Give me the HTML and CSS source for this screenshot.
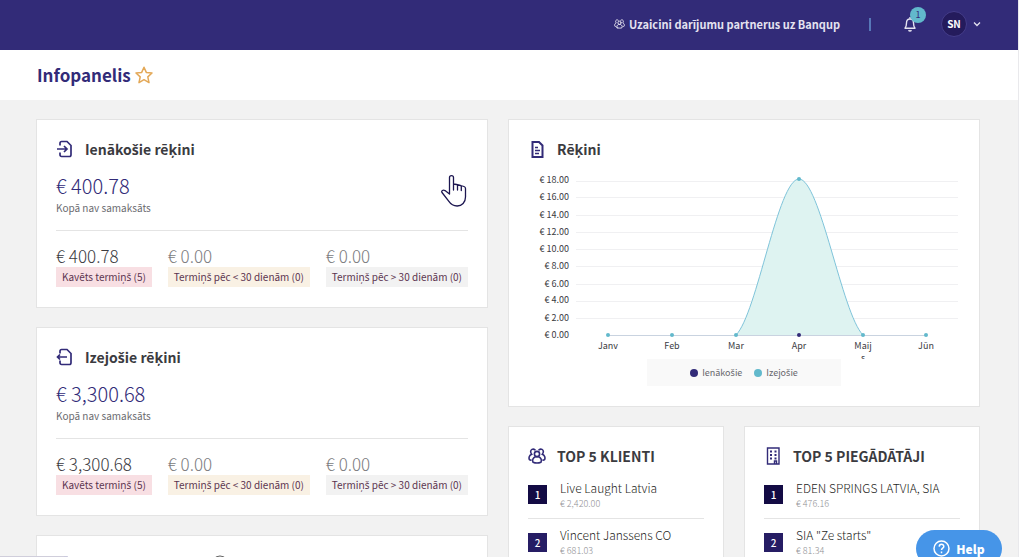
FILE: index.html
```html
<!DOCTYPE html>
<html lang="lv">
<head>
  <meta charset="UTF-8" />
  <meta name="viewport" content="width=device-width, initial-scale=1.0" />
  <title>Infopanelis</title>
  <link rel="stylesheet" href="styles.css">
</head>
<body>
  <svg class="symbols" aria-hidden="true">
    <symbol id="people" viewBox="0 0 18 16">
      <g fill="none" stroke="currentColor" stroke-width="1.6" stroke-linecap="round">
        <circle cx="9" cy="6" r="2.6" />
        <path d="M5 14.2c-1.2-2.600.4-4.600 2.400-5.400h3.200c2 .8 3.600 2.800 2.400 5.400-2 .8-6 .8-8 0z" />
        <path d="M7 1.800C5 .2 2.400 1.600 2.700 4c.1 1 .5 1.600 1 2.200C1.400 7.200.5 9.600 1.400 11.600c.5.4 1 .5 1.600.5" />
        <path d="M11 1.800c2-1.600 4.600-.2 4.300 2.200-.1 1-.5 1.600-1 2.200 2.300 1 3.200 3.400 2.300 5.400-.5.4-1 .5-1.600.5" />
      </g>
    </symbol>
  </svg>

  <header class="topbar">
    <a class="invite" href="#">
      <svg class="invite-icon"><use href="#people" /></svg>
      Uzaicini darījumu partnerus uz Banqup
    </a>
    <span class="separator"></span>
    <button class="bell" aria-label="1">
      <svg width="12" height="16" viewBox="0 0 12 16" fill="none" stroke="currentColor" stroke-width="1.4">
        <path d="M6 1v1.500M1 12.300h10c-1-1.300-1.500-2-1.500-5.300C9.500 4.500 8 3 6 3S2.500 4.500 2.500 7c0 3.300-.5 4-1.500 5.300z" stroke-linejoin="round" />
        <path d="M4.500 14.300c.8 1 2.200 1 3 0" />
      </svg>
      <span class="bell-count">1</span>
    </button>
    <button class="user">
      <span class="avatar">SN</span>
      <svg width="8" height="6" viewBox="0 0 8 6" fill="none" stroke="currentColor" stroke-width="1.3"><path d="M1 1.500l3 3 3-3" /></svg>
    </button>
  </header>

  <div class="page-title">
    <h1>Infopanelis</h1>
    <svg width="18" height="18" viewBox="0 0 18 18" fill="none" stroke="#e3a857" stroke-width="1.5" stroke-linejoin="round">
      <path d="M9 1.200l2.300 5.200 5.700.6-4.200 3.900 1.200 5.700L9 13.700l-5 2.900 1.200-5.700L1 7l5.700-.6z" />
    </svg>
  </div>

  <main class="dashboard">
    <div class="column">
      <section class="card">
        <h2 class="card-title">
          <svg class="card-icon" viewBox="0 0 18 18" fill="none" stroke="currentColor" stroke-width="1.7">
            <path d="M4 5.500V3.200C4 2.200 4.600 1.500 5.600 1.500H11l4 4v9.300c0 1-.6 1.700-1.600 1.700H5.600c-1 0-1.600-.7-1.600-1.700v-2.300M1 9h9.500M8 6l3 3-3 3" />
          </svg>
          <span>Ienāko<span class="caron">š</span>ie rēķini</span>
        </h2>
        <div class="total">€ 400.78</div>
        <div class="total-label">Kopā nav samaksāts</div>
        <div class="terms">
          <div class="term">
            <div class="amount">€ 400.78</div>
            <span class="badge late">Kavēts termiņ<span class="caron">š</span> (5)</span>
          </div>
          <div class="term">
            <div class="amount none">€ 0.00</div>
            <span class="badge soon">Termiņ<span class="caron">š</span> pēc &lt; 30 dienām (0)</span>
          </div>
          <div class="term">
            <div class="amount none">€ 0.00</div>
            <span class="badge later">Termiņ<span class="caron">š</span> pēc &gt; 30 dienām (0)</span>
          </div>
        </div>
      </section>

      <section class="card">
        <h2 class="card-title">
          <svg class="card-icon" viewBox="0 0 18 18" fill="none" stroke="currentColor" stroke-width="1.7">
            <path d="M4 5.500V3.200C4 2.200 4.600 1.500 5.600 1.500H11l4 4v9.300c0 1-.6 1.700-1.600 1.700H5.600c-1 0-1.600-.7-1.600-1.700v-2.300M1.500 9H11M4 6.500L1.500 9 4 11.500" />
          </svg>
          <span>Izejo<span class="caron">š</span>ie rēķini</span>
        </h2>
        <div class="total">€ 3,300.68</div>
        <div class="total-label">Kopā nav samaksāts</div>
        <div class="terms">
          <div class="term">
            <div class="amount">€ 3,300.68</div>
            <span class="badge late">Kavēts termiņ<span class="caron">š</span> (5)</span>
          </div>
          <div class="term">
            <div class="amount none">€ 0.00</div>
            <span class="badge soon">Termiņ<span class="caron">š</span> pēc &lt; 30 dienām (0)</span>
          </div>
          <div class="term">
            <div class="amount none">€ 0.00</div>
            <span class="badge later">Termiņ<span class="caron">š</span> pēc &gt; 30 dienām (0)</span>
          </div>
        </div>
      </section>

      <section class="card">
        <div class="card-title peek">
          <svg class="card-icon" viewBox="0 0 18 18" fill="none" stroke="currentColor" stroke-width="1.7"><path d="M8 2.500h3v14H8z" /></svg>
          <svg class="info-icon" viewBox="0 0 18 18" fill="none" stroke="#555" stroke-width="1.2"><circle cx="9" cy="9" r="8" /></svg>
        </div>
      </section>
    </div>

    <div class="column">
      <section class="card">
        <h2 class="card-title">
          <svg class="card-icon" viewBox="0 0 18 18" fill="none" stroke="currentColor" stroke-width="2">
            <path d="M4.500 2H11l3.500 3.500V17h-10z" />
            <path d="M7 7.500h3M7 10.500h5M7 13.500h4" stroke-width="1.500" />
          </svg>
          <span>Rēķini</span>
        </h2>
        <svg class="chart" viewBox="0 0 432 189">
          <path class="grid-lines" d="M48 11.500h382M48 27.500h382M48 45.500h382M48 62.500h382M48 79.500h382M48 96.500h382M48 114.500h382M48 131.500h382M48 148.500h382" />
          <path class="area" d="M208 165C229 144 250 9 271 9S314 144 335 165z" />
          <path class="axis-line" d="M80 165.500h318" />
          <path class="curve" d="M208 165C229 144 250 9 271 9S314 144 335 165" />
          <g class="dots">
            <circle cx="80" cy="165" r="2" />
            <circle cx="144" cy="165" r="2" />
            <circle cx="208" cy="165" r="2" />
            <circle class="dark" cx="271" cy="165" r="2" />
            <circle cx="271" cy="9" r="2" />
            <circle cx="335" cy="165" r="2" />
            <circle cx="398" cy="165" r="2" />
          </g>
          <g class="y-labels">
            <text x="41" y="13">€ 18.00</text>
            <text x="41" y="30">€ 16.00</text>
            <text x="41" y="48">€ 14.00</text>
            <text x="41" y="65">€ 12.00</text>
            <text x="41" y="82">€ 10.00</text>
            <text x="41" y="99">€ 8.00</text>
            <text x="41" y="117">€ 6.00</text>
            <text x="41" y="133">€ 4.00</text>
            <text x="41" y="151">€ 2.00</text>
            <text x="41" y="168">€ 0.00</text>
          </g>
          <g class="x-labels">
            <text x="80" y="179">Janv</text>
            <text x="144" y="179">Feb</text>
            <text x="208" y="179">Mar</text>
            <text x="271" y="179">Apr</text>
            <text x="335" y="179">Maij</text>
            <text x="335" y="191">s</text>
            <text x="398" y="179">Jūn</text>
          </g>
        </svg>
        <div class="legend">
          <span class="legend-item incoming"><span>Ienāko<span class="caron">š</span>ie</span></span>
          <span class="legend-item outgoing"><span>Izejo<span class="caron">š</span>ie</span></span>
        </div>
      </section>

      <div class="top-row">
        <section class="card">
          <h2 class="card-title">
            <svg class="card-icon"><use href="#people" /></svg>
            <span>TOP 5 KLIENTI</span>
          </h2>
          <ol class="top-list">
            <li>
              <span class="rank first">1</span>
              <div>
                <div class="name">Live Laught Latvia</div>
                <div class="sum">€ 2,420.00</div>
              </div>
            </li>
            <li>
              <span class="rank">2</span>
              <div>
                <div class="name">Vincent Janssens CO</div>
                <div class="sum">€ 681.03</div>
              </div>
            </li>
          </ol>
        </section>

        <section class="card">
          <h2 class="card-title">
            <svg class="card-icon" viewBox="0 0 18 18" fill="none" stroke="currentColor" stroke-width="1.400">
              <path d="M3.500 1h11.500v16h-11.500z" />
              <path d="M6 4.500h2M10.500 4.500h2M6 8h2M10.500 8h2M6 11.500h2M10.500 11.500h2" stroke-width="2" />
              <path d="M10.500 17v-3h2v3" />
            </svg>
            <span>TOP 5 PIEGĀDĀTĀJI</span>
          </h2>
          <ol class="top-list">
            <li>
              <span class="rank first">1</span>
              <div>
                <div class="name">EDEN SPRINGS LATVIA, SIA</div>
                <div class="sum">€ 476.16</div>
              </div>
            </li>
            <li>
              <span class="rank">2</span>
              <div>
                <div class="name">SIA "Ze starts"</div>
                <div class="sum">€ 81.34</div>
              </div>
            </li>
          </ol>
        </section>
      </div>
    </div>
  </main>

  <svg class="pointer" width="26" height="34" viewBox="0 0 26 34" fill="#fff" stroke="#1c1650" stroke-width="1.300" stroke-linejoin="round" stroke-linecap="round">
    <path d="M8.500 20V3.500c0-2.600 4-2.600 4 0V10l3 .5 4 1 3.500 1c1 .3 1.500 1 1.500 2V23c0 5.500-3.600 9-8.300 9-4 0-6.500-1.800-8.500-4.800L1 18.500c-1-2 1-2.800 3-1.900zM12.500 10v6M16.500 11v5M20.300 12v4.500" />
  </svg>

  <button class="help">
    <svg width="17" height="17" viewBox="0 0 17 17" fill="none" stroke="currentColor" stroke-width="1.500">
      <circle cx="8.500" cy="8.500" r="7.500" />
      <path d="M6.200 6.600c.2-3 4.600-2.900 4.600-.2 0 1.800-2.300 1.700-2.300 3.600M8.500 11.500v1.700" />
    </svg>
    Help
  </button>
  <div class="status-edge"></div>
</body>
</html>
```

FILE: styles.css
```css
* {
  box-sizing: border-box;
}
body {
  margin: 0;
  background-color: #f2f2f2;
  color: #3b3b3f;
  font-family: "Noto Sans CJK JP", "Noto Sans", sans-serif;
  font-size: 12px;
  border-right: 1px solid #e9e9ec;
}
h1, h2, ol {
  margin: 0;
  padding: 0;
}
button {
  font-family: inherit;
  border: none;
  background: none;
  padding: 0;
  cursor: pointer;
}
.symbols {
  position: absolute;
  width: 0;
  height: 0;
}
/* the main font has no s with caron */
.caron {
  font-family: "Noto Sans", sans-serif;
  line-height: 1;
}

/* header */
.topbar {
  height: 50px;
  padding: 0 37px 2px 0;
  background-color: #322b78;
  color: #e4e2f0;
  display: flex;
  align-items: center;
  justify-content: flex-end;
}
.invite {
  display: flex;
  align-items: center;
  gap: 4px;
  color: inherit;
  font-size: 11px;
  font-weight: bold;
  line-height: 18px;
  text-decoration: none;
}
.invite-icon {
  width: 11px;
  height: 10px;
}
.separator {
  width: 2px;
  height: 13px;
  margin: 0 33px 0 29px;
  background-color: #5878b8;
}
.bell {
  position: relative;
  display: flex;
  color: inherit;
}
.bell-count {
  position: absolute;
  left: 6px;
  top: -9px;
  width: 16px;
  height: 16px;
  border-radius: 50%;
  background-color: #62b9cc;
  color: #322b78;
  font-size: 9px;
  line-height: 16px;
}
.user {
  display: flex;
  align-items: center;
  gap: 6px;
  margin-left: 25px;
  color: inherit;
}
.avatar {
  width: 26px;
  height: 26px;
  border: 1px solid #443d8a;
  border-radius: 50%;
  background-color: #241b5c;
  color: #fff;
  font-size: 10px;
  font-weight: bold;
  line-height: 24px;
}

.page-title {
  display: flex;
  align-items: center;
  gap: 4px;
  height: 50px;
  padding: 0 37px;
  background-color: #fff;
}
.page-title h1 {
  color: #322b78;
  font-size: 17px;
  line-height: 24px;
}

/* cards */
.dashboard {
  display: grid;
  grid-template-columns: 113fr 118fr;
  align-items: start;
  gap: 20px;
  padding: 19px 38px 19px 36px;
}
.column {
  display: grid;
  gap: 19px;
  min-width: 0;
}
.card {
  min-width: 0;
  padding: 19px 19px 20px;
  background-color: #fff;
  border: 1px solid #e4e4e4;
}
.card-title {
  display: flex;
  align-items: center;
  gap: 11px;
  font-size: 14px;
  line-height: 20px;
  white-space: nowrap;
}
.card-icon {
  flex: none;
  width: 18px;
  height: 18px;
  color: #322b78;
}
.peek {
  padding-bottom: 150px;
}
.info-icon {
  width: 18px;
  height: 18px;
  margin-left: 126px;
}
.total {
  margin-top: 13px;
  font-size: 20px;
  font-weight: 300;
  line-height: 28px;
  color: #322b78;
}
.total-label {
  font-size: 10px;
  line-height: 16px;
  color: #6b6b70;
}
.terms {
  display: flex;
  justify-content: space-between;
  margin-top: 14px;
  padding-top: 14px;
  border-top: 1px solid #e4e4e4;
}
.amount {
  font-size: 17px;
  font-weight: 300;
  line-height: 22px;
}
.none {
  color: #7c7c80;
}
.badge {
  display: block;
  padding: 0 6px;
  font-size: 10px;
  line-height: 20px;
  color: #5c3550;
  white-space: nowrap;
}
.late {
  background-color: #f8dfe3;
}
.soon {
  background-color: #f9f1e4;
}
.later {
  background-color: #f2f2f2;
}

/* chart */
.chart {
  display: block;
  width: 100%;
  margin-top: 11px;
  overflow: hidden;
}
.grid-lines {
  stroke: #f0f0f2;
}
.area {
  fill: #def3f1;
}
.axis-line {
  stroke: #c9d3e0;
}
.curve {
  fill: none;
  stroke: #7fc4da;
}
.dots {
  fill: #62b9cc;
}
.dots .dark {
  fill: #322b78;
}
.y-labels, .x-labels {
  font-size: 9px;
  fill: #3b3b3f;
}
.y-labels {
  text-anchor: end;
}
.x-labels {
  text-anchor: middle;
}
.legend {
  display: flex;
  align-items: center;
  justify-content: center;
  gap: 12px;
  width: 45%;
  height: 27px;
  margin: 0 auto;
  background-color: #f9f9f9;
  font-size: 9px;
  color: #66666b;
}
.legend-item {
  display: flex;
  align-items: center;
  gap: 4px;
}
.legend-item::before {
  content: "";
  width: 8px;
  height: 8px;
  border-radius: 50%;
}
.incoming::before {
  background-color: #322b78;
}
.outgoing::before {
  background-color: #62b9cc;
}

/* top 5 */
.top-row {
  display: grid;
  grid-template-columns: 54fr 59fr;
  gap: 20px;
}
.top-list {
  list-style: none;
  margin-top: 5px;
}
.top-list li {
  display: flex;
  align-items: center;
  gap: 13px;
  height: 47px;
  white-space: nowrap;
}
.top-list li + li {
  border-top: 1px solid #e4e4e4;
}
.rank {
  width: 19px;
  height: 19px;
  background-color: #261d64;
  color: #fff;
  font-size: 10px;
  font-weight: 500;
  line-height: 19px;
  text-align: center;
}
.rank.first {
  background-color: #130b44;
}
.name {
  font-size: 12px;
  font-weight: 300;
  line-height: 18px;
  color: #1f1f24;
}
.sum {
  font-size: 9px;
  font-weight: 300;
  line-height: 14px;
  color: #929296;
}

.pointer {
  position: absolute;
  left: 441px;
  top: 174px;
}
.help {
  position: fixed;
  right: 17px;
  bottom: -10px;
  display: flex;
  align-items: center;
  justify-content: center;
  gap: 6px;
  width: 86px;
  height: 37px;
  border-radius: 19px;
  background-color: #4695e8;
  color: #fff;
  font-size: 12px;
  font-weight: 900;
}
.status-edge {
  position: fixed;
  left: 0;
  bottom: 0;
  width: 64px;
  height: 1px;
  background-color: #d0cedb;
}
```
